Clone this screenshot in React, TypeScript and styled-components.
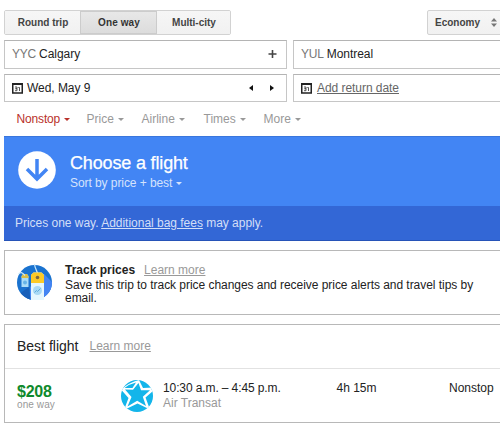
import React from "react";
import styled, { createGlobalStyle } from "styled-components";

const Global = createGlobalStyle`
  * { box-sizing: border-box; }
  body { margin: 0; background: #fff; overflow: hidden; }
`;

const Page = styled.main`
  width: 500px;
  height: 424px;
  padding: 10px 0 0 4px;
  overflow: hidden;
  font: 12px/14px "Liberation Sans", Arial, sans-serif;
  color: #222;
  white-space: nowrap;
`;

const Toolbar = styled.div`
  display: flex;
  justify-content: space-between;
  height: 25px;
`;

const Tabs = styled.div`
  display: grid;
  grid-template-columns: 75px 77px 73px;
  width: 227px;
  border: 1px solid #d2d2d2;
  border-radius: 2px;
  overflow: hidden;
`;

const Tab = styled.button<{ $active?: boolean }>`
  padding: 0 0 0 1px;
  border: 0;
  font: bold 10px/23px "Liberation Sans", Arial, sans-serif;
  letter-spacing: ${(p) => (p.$active ? 0.1 : 0)}px;
  color: ${(p) => (p.$active ? "#333" : "#444")};
  background: ${(p) => (p.$active ? "linear-gradient(#e8e8e8, #dcdcdc)" : "linear-gradient(#f6f6f6, #f1f1f1)")};
  box-shadow: ${(p) => (p.$active ? "inset 0 0 0 1px #ccc" : "none")};
`;

const Cabin = styled.button`
  display: flex;
  align-items: center;
  justify-content: space-between;
  width: 80px;
  margin-right: -7px;
  padding: 0 9px 0 7px;
  border: 1px solid #d2d2d2;
  border-radius: 2px;
  background: linear-gradient(#f6f6f6, #f1f1f1);
  font: bold 10px/23px "Liberation Sans", Arial, sans-serif;
  color: #444;
`;

const Fields = styled.div`
  display: grid;
  grid-template-columns: 283px 220px;
  grid-template-rows: 29px 28px;
  gap: 5px 6px;
  margin-top: 5px;
`;

const Field = styled.div`
  display: flex;
  align-items: center;
  padding: 0 9px 1px 7px;
  border: 1px solid #c6c6c6;
  border-top-color: #b4b4b4;
  letter-spacing: -0.05px;
`;

const Code = styled.span`
  margin-right: 3px;
  color: #777;
  letter-spacing: -0.2px;
`;

const FieldEnd = styled.span`
  display: flex;
  align-items: center;
  gap: 17px;
  margin-left: auto;
`;

const Steppers = styled(FieldEnd)`
  padding: 1px 3px 0 0;
`;

const DateText = styled.span`
  margin-left: 4px;
`;

const Link = styled.a<{ $tone?: string; $gap?: number }>`
  margin-left: ${(p) => p.$gap ?? 0}px;
  color: ${(p) => p.$tone ?? "#999"};
  text-decoration: underline;
`;

const Filters = styled.nav`
  display: grid;
  grid-template-columns: 70px 55px 62px 60px 60px;
  height: 34px;
  padding: 10px 0 0 12.5px;
`;

const Filter = styled.span<{ $active?: boolean }>`
  display: flex;
  align-items: center;
  gap: 4px;
  height: 14px;
  color: ${(p) => (p.$active ? "#b9312a" : "#999")};
  letter-spacing: ${(p) => (p.$active ? -0.15 : 0)}px;
`;

const Caret = styled.i`
  width: 0;
  height: 0;
  margin-top: 1px;
  border: 3px solid transparent;
  border-top-color: currentColor;
  border-bottom: 0;
`;

const Hero = styled.section`
  display: flex;
  height: 70px;
  padding: 14px 0 0 14px;
  background: #4285f4;
  border-top: 1px solid #3a76dc;
  color: #fff;
`;

const HeroText = styled.div`
  margin: 1px 0 0 14px;
`;

const HeroTitle = styled.h1`
  margin: 0;
  font-size: 18px;
  font-weight: normal;
  letter-spacing: -0.16px;
  line-height: 22px;
  -webkit-text-stroke: 0.25px #fff;
`;

const Sort = styled.div`
  display: flex;
  align-items: center;
  gap: 4px;
  margin-top: 2px;
  letter-spacing: -0.07px;
  color: #d5e3fc;
`;

const Notice = styled.div`
  height: 35px;
  padding: 10px 11px;
  background: #3367d6;
  border-bottom: 1px solid #2754b8;
  color: #d3dff7;
  letter-spacing: -0.02px;
`;

const Card = styled.section<{ $top: number; $height: number }>`
  width: 510px;
  height: ${(p) => p.$height}px;
  margin-top: ${(p) => p.$top}px;
  border: 1px solid #b8b8b8;
`;

const Track = styled.div`
  display: flex;
  padding: 12px 0 0 12px;
`;

const TrackText = styled.div`
  margin-left: 13px;
  line-height: 13px;
  letter-spacing: -0.042px;
`;

const TrackHead = styled.div`
  height: 16px;
  line-height: 14px;
  letter-spacing: 0;
`;

const CardHead = styled.header`
  display: flex;
  align-items: center;
  height: 44px;
  padding: 0 0 1px 12px;
  border-bottom: 1px solid #e2e2e2;
`;

const CardTitle = styled.h2`
  margin: 0;
  font-size: 14px;
  font-weight: normal;
`;

const FlightRow = styled.div`
  display: grid;
  grid-template-columns: 104px 42px 173.500px 112.500px 70px;
  padding: 12px 0 0 12px;
  line-height: 15px;
`;

const Times = styled.div`
  letter-spacing: -0.11px;
`;

const Price = styled.div`
  padding-top: 3px;
  font-size: 16px;
  font-weight: bold;
  letter-spacing: -0.25px;
  color: #0f8a2c;
`;

const Muted = styled.div<{ $small?: boolean }>`
  font-size: ${(p) => (p.$small ? 10 : 12)}px;
  line-height: ${(p) => (p.$small ? 11 : 14)}px;
  font-weight: normal;
  letter-spacing: ${(p) => (p.$small ? 0.1 : 0)}px;
  color: #999;
`;

const CalendarSvg = styled.svg`
  margin-top: 1px;
`;

const Calendar = () => (
  <CalendarSvg width="11" height="11" viewBox="0 0 11 11" fill="none">
    <path d="M.75 1h9.5v9H.75z" stroke="#222" strokeWidth="1.5" />
    <path d="M0 1h11" stroke="#222" strokeWidth="2" />
    <path d="M3 4h2v1.700H3.500h1.500v2H3M6.300 4.500h1.200V8" stroke="#444" strokeWidth=".9" />
  </CalendarSvg>
);

const Plus = () => (
  <svg width="9" height="8" viewBox="0 0 9 8">
    <path d="M4.500 0v8M.5 4h8" stroke="#444" strokeWidth="1.600" />
  </svg>
);

const Arrow = ({ left = false }: { left?: boolean }) => (
  <svg width="4" height="6" viewBox="0 0 4 6">
    <path d={left ? "M4 0v6L0 3z" : "M0 0v6l4-3z"} fill="#111" />
  </svg>
);

const UpDown = () => (
  <svg width="6" height="9" viewBox="0 0 6 9">
    <path d="M0 3.500 3 0l3 3.500zM0 5.500h6L3 9z" fill="#777" />
  </svg>
);

const DownCircle = () => (
  <svg width="38" height="38" viewBox="0 0 38 38">
    <circle cx="19" cy="19" r="18.800" fill="#fff" />
    <path d="M19 8v20M9 18l10 10 10-10" fill="none" stroke="#4285f4" strokeWidth="3.500" />
  </svg>
);

const PriceTags = () => (
  <svg width="35" height="38" viewBox="0 0 35 38">
    <defs>
      <clipPath id="disc"><circle cx="17.500" cy="19.500" r="17.500" /></clipPath>
    </defs>
    <circle cx="17.500" cy="19.500" r="17.500" fill="#1972cf" />
    <g clipPath="url(#disc)">
      <path d="M27 11 37 21v18H13V24z" fill="#4384f3" />
      <path d="M12 24 2 31l12 10z" fill="#185fb9" />
    </g>
    <path d="M4.500 13 6 11h4l1.500 2v11h-7z" fill="#a9dcf8" />
    <path d="M4.500 13.500 6 11h4l1.500 2.500V15h-7z" fill="#dabe48" />
    <circle cx="8" cy="19.500" r="2" fill="#64b3e7" />
    <path d="M8 12.500C5 9 3.500 9 1.500 11M21 13C21 8 18 7 17.500 1" stroke="#cbe9fa" strokeWidth="1.200" fill="none" />
    <path d="M14 12 16.500 9.500h8L27 12v25H14z" fill="#e4f6fe" />
    <path d="M14 12 16.500 9.500h8L27 12v8H14z" fill="#fcca26" />
    <circle cx="20.500" cy="14.500" r="1.800" fill="#7c6840" />
    <circle cx="20.500" cy="27.500" r="4.500" fill="#a8d9f5" />
    <path d="m17.500 29.500 2-2 1 1 3-3" stroke="#5babdc" fill="none" />
  </svg>
);

const LogoSvg = styled.svg`
  margin-top: -1px;
`;

const AirlineLogo = () => (
  <LogoSvg width="32" height="32" viewBox="0 0 32 32">
    <defs>
      <clipPath id="logo"><circle cx="16" cy="16" r="16" /></clipPath>
    </defs>
    <g clipPath="url(#logo)">
      <path d="M0 0h32v32H0z" fill="#13b5ea" />
      <path d="M0 9.500Q8 2.500 18 0L22 8 33 7.500V10L24.500 17.500 29 29.500 16.500 23.500 3 30 7.500 18z" fill="#fff" />
      <path d="M4 9.500 12 9.800 17.500 3 20 10.200 29 10.200 21.800 16.800 25 26 16.200 20.800 6.500 26.500 10.500 17z" fill="#13b5ea" />
      <path d="M3.500 8Q8.500 4 15 2.500L11.500 8z" fill="#13b5ea" />
    </g>
  </LogoSvg>
);

export default function App() {
  return (
    <Page>
      <Global />
      <Toolbar>
        <Tabs><Tab>Round trip</Tab><Tab $active>One way</Tab><Tab>Multi-city</Tab></Tabs>
        <Cabin>Economy <UpDown /></Cabin>
      </Toolbar>
      <Fields>
        <Field><Code>YYC</Code>Calgary<FieldEnd><Plus /></FieldEnd></Field>
        <Field><Code>YUL</Code>Montreal</Field>
        <Field><Calendar /><DateText>Wed, May 9</DateText><Steppers><Arrow left /><Arrow /></Steppers></Field>
        <Field><Calendar /><Link $tone="#666" $gap={5}>Add return date</Link></Field>
      </Fields>
      <Filters>
        {["Nonstop", "Price", "Airline", "Times", "More"].map((name, i) => (
          <Filter key={name} $active={i === 0}>{name}<Caret /></Filter>
        ))}
      </Filters>
      <Hero>
        <DownCircle />
        <HeroText>
          <HeroTitle>Choose a flight</HeroTitle>
          <Sort>Sort by price + best <Caret /></Sort>
        </HeroText>
      </Hero>
      <Notice>Prices one way. <Link $tone="inherit">Additional bag fees</Link> may apply.</Notice>
      <Card $top={9} $height={65}>
        <Track>
          <PriceTags />
          <TrackText>
            <TrackHead><b>Track prices</b><Link $gap={9}>Learn more</Link></TrackHead>
            Save this trip to track price changes and receive price alerts and travel tips by<br />email.
          </TrackText>
        </Track>
      </Card>
      <Card $top={9} $height={99}>
        <CardHead><CardTitle>Best flight</CardTitle><Link $gap={11}>Learn more</Link></CardHead>
        <FlightRow>
          <Price>$208<Muted $small>one way</Muted></Price>
          <AirlineLogo />
          <Times>10:30 a.m. – 4:45 p.m.<Muted>Air Transat</Muted></Times>
          <div>4h 15m</div>
          <div>Nonstop</div>
        </FlightRow>
      </Card>
    </Page>
  );
}
